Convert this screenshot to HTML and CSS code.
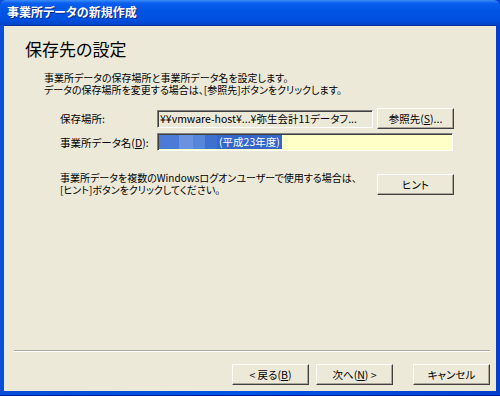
FILE: index.html
```html
<!DOCTYPE html>
<html lang="ja">
<head>
    <meta charset="UTF-8">
    <title>事業所データの新規作成</title>
    <link rel="stylesheet" href="styles.css">
</head>
<body>
    <div class="window">
        <div class="titlebar">事業所データの新規作成</div>

        <div class="client">
            <h1>保存先の設定</h1>

            <p class="desc">事業所データの保存場所と事業所データ名を設定します。<br>データの保存場所を変更する場合は、[参照先]ボタンをクリックします。</p>

            <div class="form">
                <div class="row">
                    <span class="label">保存場所:</span>
                    <div class="field path">¥¥vmware-host¥...¥弥生会計11データフ...</div>
                    <button class="btn">参照先(<u>S</u>)...</button>
                </div>
                <div class="row">
                    <span class="label">事業所データ名(<u>D</u>):</span>
                    <div class="field name"><span class="sel"><span class="blur"></span>(平成23年度)</span></div>
                </div>
            </div>

            <div class="hint-row">
                <p class="hint">事業所データを複数のWindowsログオンユーザーで使用する場合は、<br>[ヒント]ボタンをクリックしてください。</p>
                <button class="btn">ヒント</button>
            </div>

            <div class="spacer"></div>

            <div class="separator"></div>

            <div class="actions">
                <button class="btn">&lt; 戻る(<u>B</u>)</button>
                <button class="btn">次へ(<u>N</u>) &gt;</button>
                <button class="btn cancel">キャンセル</button>
            </div>
        </div>
    </div>
</body>
</html>
```

FILE: styles.css
```css
body {
    margin: 0;
    font-family: "Noto Sans CJK JP", "Liberation Sans", sans-serif;
    font-size: 11px;
    font-feature-settings: "palt";
    color: #000;
}
.window {
    width: 500px;
    height: 396px;
    box-sizing: border-box;
    display: flex;
    flex-direction: column;
    background: linear-gradient(to right, #0a4ed8, #0055e5 50%, #003fd0);
    padding: 0 4px 4px;
    border-bottom: 1px solid #001d8a;
}
.titlebar {
    height: 25px;
    line-height: 24px;
    margin: 0 -4px;
    padding-left: 7px;
    color: #fff;
    font-weight: bold;
    font-size: 12px;
    text-shadow: 1px 1px 0 #0a2a8c;
    background: linear-gradient(to bottom, #3c8cf8 0%, #0a5fee 12%, #0055e5 40%, #0050df 80%, #0043c8 100%);
    border-radius: 6px 6px 0 0;
}
.client {
    flex: 1;
    background: #ece9d8;
    border-top: 1px solid #0831a0;
    display: flex;
    flex-direction: column;
}
h1 {
    margin: 12px 0 0 21px;
    font-size: 17px;
    font-weight: normal;
    line-height: 22px;
}
.desc {
    margin: 12px 0 0 40px;
    font-size: 10px;
    line-height: 12px;
    white-space: nowrap;
}
.form {
    margin: 12px 0 0 56px;
    display: flex;
    flex-direction: column;
    gap: 4px;
}
.row {
    display: flex;
    align-items: center;
    gap: 4px;
}
.label {
    flex: 0 0 93px;
    font-size: 10.5px;
    white-space: nowrap;
}
.field {
    height: 18px;
    box-sizing: border-box;
    border: 1px solid;
    border-color: #808080 #fff #fff #808080;
    box-shadow: inset 1px 1px 0 #404040;
    font-size: 10.5px;
    line-height: 16px;
    padding-left: 2px;
    white-space: nowrap;
    overflow: hidden;
}
.path {
    width: 216px;
    background: #ece9d8;
}
.name {
    width: 296px;
    background: #ffffc8;
    padding-left: 1px;
}
.sel {
    display: inline-flex;
    align-items: center;
    height: 14px;
    margin-top: 1px;
    background: #3567c8;
    color: #fff;
    padding-right: 2px;
    vertical-align: top;
}
.blur {
    width: 58px;
    height: 14px;
    margin-right: 2px;
    background: linear-gradient(to right, #4b7bd6 0 20px, #6a92e0 20px 34px, #5586dc 34px 46px, #3e70cf 46px);
}
.btn {
    width: 77px;
    height: 21px;
    box-sizing: border-box;
    font-family: inherit;
    font-size: 10.5px;
    font-feature-settings: "palt";
    padding: 0;
    background: #ece9d8;
    color: #000;
    border: 1px solid;
    border-color: #fff #404040 #404040 #fff;
    box-shadow: inset -1px -1px 0 #aca899;
}
.hint-row {
    margin: 21px 0 0 56px;
    display: flex;
    align-items: center;
}
.hint {
    margin: 0;
    width: 317px;
    font-size: 10px;
    line-height: 12px;
    white-space: nowrap;
}
.spacer {
    flex: 1;
}
.separator {
    margin: 0 6px 0 10px;
    border-top: 1px solid #aca899;
    border-bottom: 1px solid #fff;
}
.actions {
    display: flex;
    justify-content: flex-end;
    padding: 12px 6px 6px 0;
    gap: 7px;
}
.cancel {
    margin-left: 13px;
}
```
